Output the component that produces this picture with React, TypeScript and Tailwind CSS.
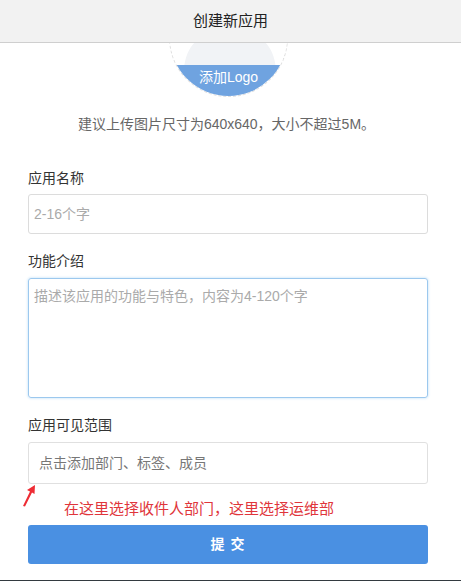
import React from "react";

const font = { fontFamily: '"Liberation Sans", "Noto Sans CJK SC", sans-serif' };

function LogoUpload() {
  return (
    <div className="relative ml-[169px] -mt-[65px] w-[119px] h-[119px] rounded-full overflow-hidden border border-dashed border-[#dedede] bg-white">
      <svg width="119" height="119" viewBox="0 0 119 119" className="absolute inset-0">
        <path d="M14 90 C16 66 30 56 44 54 C42 42 50 30 60 30 C70 30 78 42 76 54 C90 56 104 66 106 90 Z" fill="#f1f3f6" />
      </svg>
      <div className="absolute left-0 right-0 bottom-0 h-[31px] bg-[#6fa3e0] flex items-start justify-center pt-[2px]">
        <span className="text-[14px] text-white leading-[20px]">添加Logo</span>
      </div>
    </div>
  );
}

export default function App() {
  return (
    <div className="w-[461px] h-[581px] bg-white flex flex-col overflow-hidden text-[#333]" style={font}>
      <div className="relative z-10 h-[43px] shrink-0 bg-[#f2f2f2] border-b border-[#cfcfcf] flex items-center justify-center">
        <span className="text-[15px] text-[#222]">创建新应用</span>
      </div>

      <LogoUpload />

      <p className="mt-[17px] pr-[8px] text-center text-[14px] text-[#666] leading-[20px]">
        建议上传图片尺寸为640x640，大小不超过5M。
      </p>

      <div className="pl-[28px] pr-[33px] flex flex-col">
        <label className="mt-[34px] text-[14px] leading-[20px] text-[#333]">应用名称</label>
        <div className="mt-[6px] h-[40px] rounded-[3px] border border-[#dcdcdc] flex items-center px-[5px]">
          <span className="text-[14px] text-[#aaa]">2-16个字</span>
        </div>

        <label className="mt-[17px] text-[14px] leading-[20px] text-[#333]">功能介绍</label>
        <div className="mt-[7px] h-[120px] rounded-[3px] border border-[#9cc8ee] shadow-[0_0_3px_#b9dcf7] px-[5px] pt-[5px]">
          <span className="text-[14px] text-[#aaa] leading-[20px]">描述该应用的功能与特色，内容为4-120个字</span>
        </div>

        <label className="mt-[17px] text-[14px] leading-[20px] text-[#333]">应用可见范围</label>
        <div className="mt-[7px] h-[42px] rounded-[3px] border border-[#e0e0e0] flex items-center px-[10px]">
          <span className="text-[14px] text-[#777]">点击添加部门、标签、成员</span>
        </div>

        <div className="relative h-[41px]">
          <svg width="14" height="22" viewBox="0 0 14 22" className="absolute left-[-5px] top-[1px]">
            <path d="M12 0 L4 5 L7 6.5 L0 21 L2 21.5 L9 7.5 L11.5 9 Z" fill="#ee2c34" />
          </svg>
          <span className="absolute left-[36px] top-[15px] text-[15px] leading-[20px] text-[#e0353b]">
            在这里选择收件人部门，这里选择运维部
          </span>
        </div>

        <button
          type="button"
          className="h-[39px] rounded-[3px] bg-[#4a90e2] text-white text-[14px] font-bold tracking-[1px]"
        >
          提 交
        </button>
      </div>

      <div className="mt-auto h-px bg-[#333a40]" />
    </div>
  );
}
